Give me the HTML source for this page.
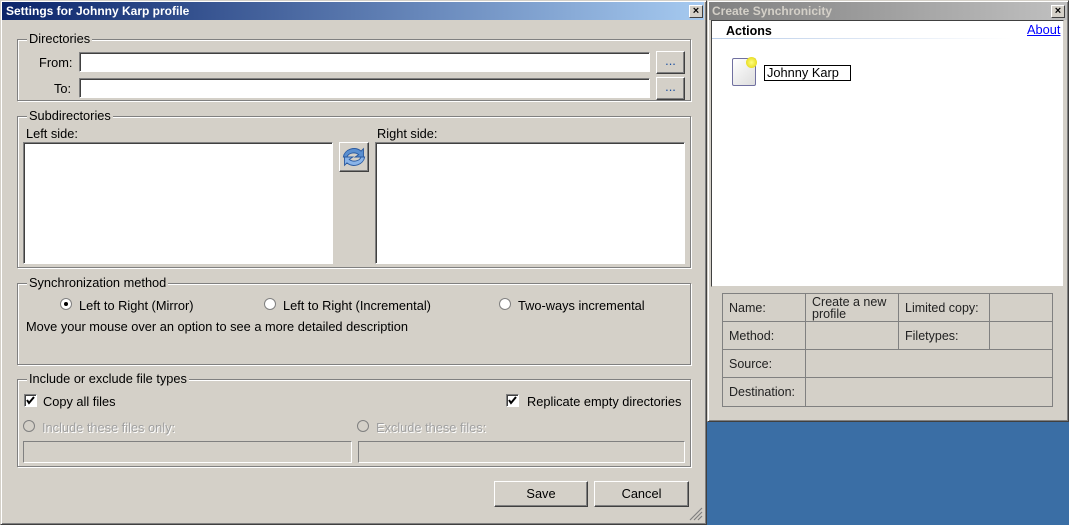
<!DOCTYPE html>
<html><head><style>
*{box-sizing:border-box;margin:0;padding:0}
body{width:1069px;height:525px;background:#3a6ea5;position:relative;overflow:hidden;font-family:"Liberation Sans","DejaVu Sans",sans-serif;font-size:12.8px;color:#000}
.a{position:absolute}
.win{background:#d4d0c8;border:1px solid #d4d0c8;border-right-color:#404040;border-bottom-color:#404040;box-shadow:inset 1px 1px #fff,inset -1px -1px #808080}
.grp{position:absolute;border:1px solid #808080;box-shadow:1px 1px #fff,inset 1px 1px #fff}
.lg{position:absolute;top:-8px;left:9px;background:#d4d0c8;padding:0 2px;line-height:14px}
.inp{position:absolute;background:#fff;border:1px solid;border-color:#808080 #fff #fff #808080;box-shadow:inset 1px 1px #404040}
.btn{position:absolute;background:#d4d0c8;border:1px solid;border-color:#fff #404040 #404040 #fff;box-shadow:inset -1px -1px #808080;text-align:center}
.x{position:absolute;width:14px;height:13px;background:#d4d0c8;border:1px solid;border-color:#fff #404040 #404040 #fff;font-size:11px;line-height:10px;text-align:center;font-weight:bold}
.rad{position:absolute;width:12px;height:12px;border-radius:50%;background:#fff;border:1px solid #808080}
.cb{position:absolute;width:13px;height:13px;background:#fff;border:1px solid;border-color:#808080 #fff #fff #808080;box-shadow:inset 1px 1px #404040}
.dis{color:#a0a0a0;text-shadow:1px 1px #fff}
td{border:1px solid #808080;padding:0 6px;font-size:12.5px;color:#222;vertical-align:middle;line-height:12px}
</style></head><body>

<div class="a win" style="left:0;top:0;width:707px;height:525px"></div>
<div class="a" style="left:2px;top:2px;width:702px;height:18px;background:linear-gradient(90deg,#0a246a,#a6caf0)"></div>
<div class="a" style="left:6px;top:4px;color:#fff;font-weight:bold;font-size:12px">Settings for Johnny Karp profile</div>
<div class="x" style="left:689px;top:5px">×</div>

<div class="grp" style="left:17px;top:39px;width:674px;height:62px"><span class="lg">Directories</span></div>
<div class="a" style="left:39px;top:55px">From:</div>
<div class="inp" style="left:79px;top:52px;width:571px;height:20px"></div>
<div class="btn" style="left:656px;top:51px;width:29px;height:23px;color:#1a4fa0;line-height:18px">...</div>
<div class="a" style="left:54px;top:81px">To:</div>
<div class="inp" style="left:79px;top:78px;width:571px;height:20px"></div>
<div class="btn" style="left:656px;top:77px;width:29px;height:23px;color:#1a4fa0;line-height:18px">...</div>

<div class="grp" style="left:17px;top:116px;width:674px;height:152px"><span class="lg">Subdirectories</span></div>
<div class="a" style="left:26px;top:126px">Left side:</div>
<div class="inp" style="left:23px;top:142px;width:310px;height:122px"></div>
<div class="btn" style="left:339px;top:142px;width:30px;height:30px;padding:1px">
<svg width="26" height="26" viewBox="0 0 22 22"><path d="M2 11a9 8 0 0 1 15-5l2-2v7h-7l3-2a6 5 0 0 0-10 2z" fill="#5a8fd0" stroke="#2a5aa0" stroke-width=".8"/><path d="M20 11a9 8 0 0 1-15 5l-2 2v-7h7l-3 2a6 5 0 0 0 10-2z" fill="#8ab4e8" stroke="#2a5aa0" stroke-width=".8"/></svg></div>
<div class="a" style="left:377px;top:126px">Right side:</div>
<div class="inp" style="left:375px;top:142px;width:310px;height:122px"></div>

<div class="grp" style="left:17px;top:283px;width:674px;height:82px"><span class="lg">Synchronization method</span></div>
<div class="rad" style="left:60px;top:298px"><div style="width:4px;height:4px;background:#000;border-radius:50%;margin:3px"></div></div>
<div class="a" style="left:79px;top:298px">Left to Right (Mirror)</div>
<div class="rad" style="left:264px;top:298px"></div>
<div class="a" style="left:283px;top:298px">Left to Right (Incremental)</div>
<div class="rad" style="left:499px;top:298px"></div>
<div class="a" style="left:518px;top:298px">Two-ways incremental</div>
<div class="a" style="left:26px;top:319px">Move your mouse over an option to see a more detailed description</div>

<div class="grp" style="left:17px;top:379px;width:674px;height:88px"><span class="lg">Include or exclude file types</span></div>
<div class="cb" style="left:24px;top:394px"><svg class="a" style="left:1px;top:1px" width="9" height="9"><path d="M1 4l2 3 5-6" stroke="#000" stroke-width="2" fill="none"/></svg></div>
<div class="a" style="left:43px;top:394px">Copy all files</div>
<div class="cb" style="left:506px;top:394px"><svg class="a" style="left:1px;top:1px" width="9" height="9"><path d="M1 4l2 3 5-6" stroke="#000" stroke-width="2" fill="none"/></svg></div>
<div class="a" style="left:527px;top:394px">Replicate empty directories</div>
<div class="rad" style="left:23px;top:420px;background:#d4d0c8"></div>
<div class="a dis" style="left:42px;top:420px">Include these files only:</div>
<div class="rad" style="left:357px;top:420px;background:#d4d0c8"></div>
<div class="a dis" style="left:376px;top:420px">Exclude these files:</div>
<div class="inp" style="left:23px;top:441px;width:329px;height:22px;background:#d4d0c8;box-shadow:none"></div>
<div class="inp" style="left:358px;top:441px;width:327px;height:22px;background:#d4d0c8;box-shadow:none"></div>

<div class="btn" style="left:494px;top:481px;width:94px;height:26px;line-height:23px">Save</div>
<div class="btn" style="left:594px;top:481px;width:95px;height:26px;line-height:23px">Cancel</div>
<svg class="a" style="left:689px;top:507px" width="14" height="14"><path d="M13 1L1 13M13 5L5 13M13 9L9 13" stroke="#808080" stroke-width="1.2"/></svg>

<div class="a win" style="left:707px;top:0;width:362px;height:422px"></div>
<div class="a" style="left:709px;top:2px;width:358px;height:18px;background:linear-gradient(90deg,#808080,#c0c0c0)"></div>
<div class="a" style="left:712px;top:4px;color:#d4d0c8;font-weight:bold;font-size:12px">Create Synchronicity</div>
<div class="x" style="left:1051px;top:5px">×</div>
<div class="a" style="left:711px;top:20px;width:353px;height:267px;background:#fff;border:1px solid;border-color:#404040 #d4d0c8 #d4d0c8 #404040"></div>
<div class="a" style="left:726px;top:24px;font-weight:bold;font-size:12.5px">Actions</div>
<div class="a" style="left:712px;top:38px;width:300px;height:1px;background:linear-gradient(90deg,#b8cce8,#fff)"></div>
<div class="a" style="left:1027px;top:22px;color:#00f;text-decoration:underline">About</div>
<div class="a" style="left:732px;top:58px;width:24px;height:28px;background:linear-gradient(135deg,#fff,#ddd);border:1px solid #7070a0;border-radius:2px"></div>
<div class="a" style="left:746px;top:57px;width:11px;height:11px;border-radius:50%;background:radial-gradient(#ffff80,#e0d000)"></div>
<div class="a" style="left:764px;top:65px;width:87px;height:16px;border:1px solid #000;padding-left:2px;line-height:14px">Johnny Karp</div>

<table class="a" style="left:722px;top:293px;width:331px;height:114px;border-collapse:collapse">
<tr style="height:28px"><td style="width:83px">Name:</td><td style="width:93px">Create a new profile</td><td style="width:91px">Limited copy:</td><td></td></tr>
<tr style="height:28px"><td>Method:</td><td></td><td>Filetypes:</td><td></td></tr>
<tr style="height:28px"><td>Source:</td><td colspan="3"></td></tr>
<tr style="height:29px"><td>Destination:</td><td colspan="3"></td></tr>
</table>
</body></html>
